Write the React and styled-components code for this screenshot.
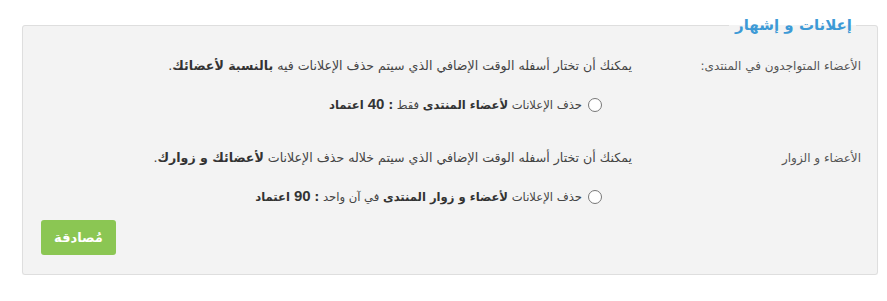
import styled, { createGlobalStyle } from 'styled-components';

const GlobalStyle = createGlobalStyle`
  body {
    margin: 0;
    background: #fff;
    font-family: "DejaVu Sans", "Noto Sans", sans-serif;
  }
`;

const Page = styled.div`
  direction: rtl;
  padding: 14px 9px 0 22px;
`;

const Box = styled.fieldset`
  margin: 0;
  height: 261px;
  box-sizing: border-box;
  border: 1px solid #dedede;
  border-radius: 3px;
  background: #f3f3f3;
  padding: 0 16px 0 18px;
  box-shadow: 0 1px 1px rgba(0, 0, 0, 0.04);
`;

const Legend = styled.legend`
  padding: 0 4px 0 6px;
  margin-right: 5px;
  font-size: 15px;
  font-weight: bold;
  color: #3d9ad6;
  line-height: 22px;
`;

const Row = styled.div`
  display: grid;
  grid-template-columns: 229px 1fr;
  margin-top: ${(p) => p.$top}px;
`;

const Label = styled.div`
  font-size: 12px;
  color: #555;
  line-height: 18px;
`;

const Content = styled.div`
  display: flex;
  flex-direction: column;
  gap: 20px;
`;

const Text = styled.div`
  font-size: 12.6px;
  color: #444;
  line-height: 18px;
  b {
    color: #333;
  }
`;

const Option = styled.label`
  display: flex;
  align-items: center;
  gap: 6px;
  padding-right: 30px;
  font-size: 11.6px;
  color: #444;
  line-height: 18px;
  b {
    color: #333;
  }
`;

const Radio = styled.span`
  width: 12px;
  height: 12px;
  border: 1px solid #777;
  border-radius: 50%;
  background: #fff;
  flex: none;
`;

const Num = styled.b`
  font-family: "Liberation Sans", Arial, sans-serif;
  font-size: 15px;
  margin: 0 4px;
`;

const Submit = styled.button`
  margin-top: 14px;
  width: 75px;
  height: 35px;
  border: none;
  border-radius: 3px;
  background: #8bc653;
  color: #fff;
  font-family: "DejaVu Sans", sans-serif;
  font-size: 13px;
  font-weight: bold;
`;

const Footer = styled.div`
  display: flex;
  justify-content: flex-end;
`;

export default function App() {
  return (
    <>
      <GlobalStyle />
      <Page>
        <Box>
          <Legend>إعلانات و إشهار</Legend>
          <Row $top={21}>
            <Label>الأعضاء المتواجدون في المنتدى:</Label>
            <Content>
              <Text>
                يمكنك أن تختار أسفله الوقت الإضافي الذي سيتم حذف الإعلانات فيه <b>بالنسبة لأعضائك</b>.
              </Text>
              <Option>
                <Radio />
                <span>
                  حذف الإعلانات <b>لأعضاء المنتدى</b> فقط <b>:</b>
                  <Num>40</Num>
                  <b>اعتماد</b>
                </span>
              </Option>
            </Content>
          </Row>
          <Row $top={35}>
            <Label>الأعضاء و الزوار</Label>
            <Content>
              <Text>
                يمكنك أن تختار أسفله الوقت الإضافي الذي سيتم خلاله حذف الإعلانات <b>لأعضائك و زوارك</b>.
              </Text>
              <Option>
                <Radio />
                <span>
                  حذف الإعلانات <b>لأعضاء و زوار المنتدى</b> في آن واحد <b>:</b>
                  <Num>90</Num>
                  <b>اعتماد</b>
                </span>
              </Option>
            </Content>
          </Row>
          <Footer>
            <Submit>مُصادقة</Submit>
          </Footer>
        </Box>
      </Page>
    </>
  );
}
